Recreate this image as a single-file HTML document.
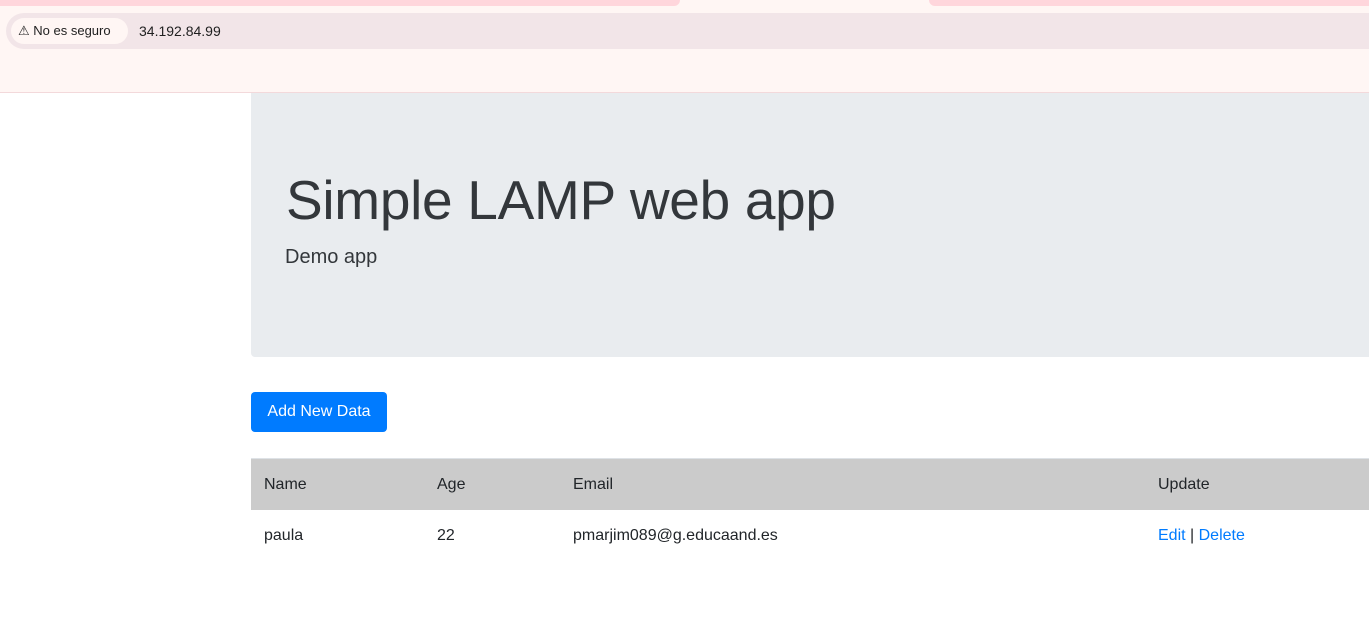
<!DOCTYPE html>
<html><head><meta charset="utf-8"><style>
*{margin:0;padding:0;box-sizing:border-box}
body{width:1369px;height:627px;overflow:hidden;background:#fff;font-family:"Liberation Sans",sans-serif;color:#212529;position:relative}
.chrome{position:absolute;left:0;top:0;width:1369px;height:93px;background:#fff6f4;border-bottom:1px solid #f3d9db}
.t1{position:absolute;left:0;top:0;width:680px;height:6px;background:#ffd6dc;border-radius:0 0 7px 0}
.t2{position:absolute;left:929px;top:0;width:440px;height:6px;background:#ffd6dc;border-radius:0 0 0 7px}
.addr{position:absolute;left:6px;top:13px;width:1363px;height:36px;background:#f2e5e8;border-radius:18px 0 0 18px}
.pill{position:absolute;left:5px;top:5px;height:26px;width:117px;background:#fff6f4;border-radius:13px;font-size:13px;line-height:26px;padding-left:7px;color:#1f1f1f}
.url{position:absolute;left:133px;top:0;line-height:36px;font-size:14px;color:#1f1f1f}
.jumbo{position:absolute;left:251px;top:93px;width:1118px;height:264px;background:#e9ecef;border-radius:0 0 0 4px}
h1{position:absolute;left:35px;top:75px;font-size:55px;font-weight:normal;color:#33373b;white-space:nowrap;letter-spacing:-0.3px}
.lead{position:absolute;left:34px;top:153px;font-size:20px;color:#33373b}
.btn{position:absolute;left:251px;top:392px;width:136px;height:40px;background:#007bff;color:#fff;border-radius:4px;font-size:16px;line-height:40px;text-align:center}
.thead{position:absolute;left:251px;top:458px;width:1118px;height:52px;background:#cbcbcb;border-top:1px solid #dee2e6}
.row{position:absolute;left:251px;top:510px;width:1118px;height:50px}
.c{position:absolute;font-size:16px;line-height:50px;top:1px}
a{color:#007bff;text-decoration:none}
</style></head><body>
<div class="chrome"><div class="t1"></div><div class="t2"></div>
<div class="addr"><div class="pill">⚠ No es seguro</div><div class="url">34.192.84.99</div></div></div>
<div class="jumbo"><h1>Simple LAMP web app</h1><div class="lead">Demo app</div></div>
<div class="btn">Add New Data</div>
<div class="thead"><span class="c" style="left:13px">Name</span><span class="c" style="left:186px">Age</span><span class="c" style="left:322px">Email</span><span class="c" style="left:907px">Update</span></div>
<div class="row"><span class="c" style="left:13px">paula</span><span class="c" style="left:186px">22</span><span class="c" style="left:322px">pmarjim089@g.educaand.es</span><span class="c" style="left:907px"><a>Edit</a> | <a>Delete</a></span></div>
</body></html>
